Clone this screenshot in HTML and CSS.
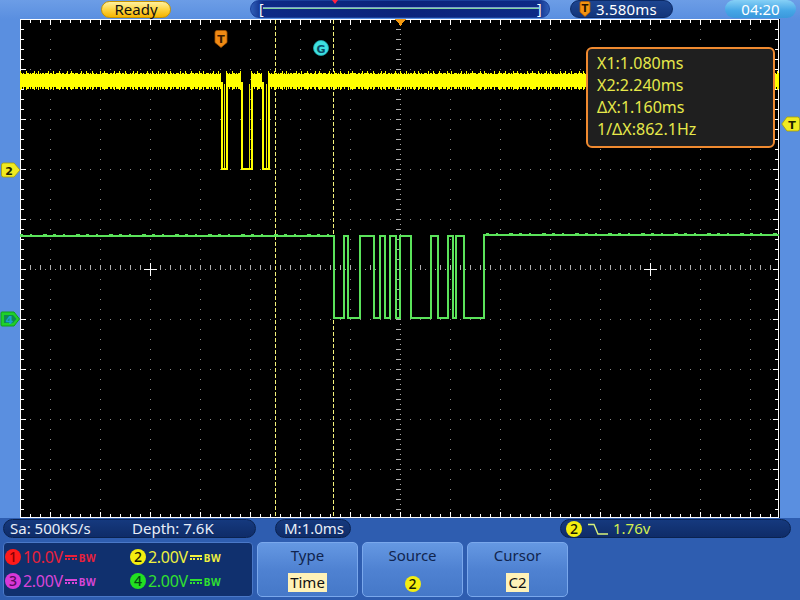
FILE: index.html
```html
<!DOCTYPE html>
<html>
<head>
<meta charset="utf-8">
<link rel="stylesheet" href="styles.css">
</head>
<body>
<div class="scope">
  <header class="topbar">
    <div class="ready">Ready</div>
    <div class="timebar">
      <svg class="timebar-svg" width="300" height="18" viewBox="0 0 300 18">
        <path d="M13,8.5 H289" stroke="#7fd6a0" stroke-width="1"/>
        <path d="M13,7.5 H289" stroke="#c9e8ff" stroke-width="1" opacity="0.6"/>
        <polygon points="82,0 88,0 85,4" fill="#ff2040"/>
      </svg>
      <span class="br br-l">[</span><span class="br br-r">]</span>
    </div>
    <div class="tpill">
      <svg class="ticon" width="12" height="16" viewBox="0 0 12 16"><path d="M1,2 Q1,0.5 2.5,0.5 H9.5 Q11,0.5 11,2 V11 L6,15.5 L1,11 Z" fill="#f39412" stroke="#b35a00" stroke-width="0.8"/><text x="6" y="10.5" text-anchor="middle" class="ticon-t">T</text></svg>
      <span class="tpill-text">3.580ms</span>
    </div>
    <div class="clock">04:20</div>
  </header>

  <main class="mid">
    <div class="gutter gutter-l"></div>
    <div class="screen">
      <svg class="scr" width="760" height="499" viewBox="20 19 760 499" shape-rendering="crispEdges">
        <rect x="20" y="19" width="760" height="499" fill="#000"/>
        <!-- grid dots -->
        <path stroke="#8a8a8a" stroke-width="1" stroke-dasharray="1 9"
          d="M50.5,19V518 M100.5,19V518 M150.5,19V518 M200.5,19V518 M250.5,19V518 M300.5,19V518 M350.5,19V518 M450.5,19V518 M500.5,19V518 M550.5,19V518 M600.5,19V518 M650.5,19V518 M700.5,19V518 M750.5,19V518
             M20,69.5H779 M20,119.5H779 M20,169.5H779 M20,219.5H779 M20,319.5H779 M20,369.5H779 M20,419.5H779 M20,469.5H779"/>
        <!-- center axes -->
        <path stroke="#a0a0a0" stroke-width="1" stroke-dasharray="1 4" d="M20,269.5H779 M400.5,19V518"/>
        <path stroke="#b0b0b0" stroke-width="5" stroke-dasharray="1 9" d="M398,19V518"/>
        <path stroke="#b0b0b0" stroke-width="5" stroke-dasharray="1 9" d="M20,267.5H779"/>
        <!-- crosshairs -->
        <path stroke="#ffffff" stroke-width="1" d="M144,269.5H157 M150.5,263V276 M644,269.5H657 M650.5,263V276"/>
        <!-- edge ticks -->
        <g stroke="#ffffff">
          <path stroke-width="4" stroke-dasharray="1 9" d="M20,21H780 M20,516H780"/>
          <path stroke-width="6" stroke-dasharray="1 49" d="M50,22H780 M50,515H780"/>
          <path stroke-width="4" stroke-dasharray="1 9" d="M22,19V518 M777,19V518"/>
          <path stroke-width="6" stroke-dasharray="1 49" d="M23,69V518 M776,69V518"/>
          <rect x="20.5" y="19.5" width="758" height="498" fill="none" stroke-width="1"/>
        </g>
        <!-- cursor lines -->
        <path stroke="#f4f27a" stroke-width="1" stroke-dasharray="4 2" d="M275.5,20V517 M333.5,20V517"/>
        <!-- CH2 yellow trace -->
        <g stroke="#ffff00" fill="none">
          <path stroke-width="13" d="M20,80.5H221 M226,80.5H241 M251,80.5H262 M268,80.5H779"/>
          <path stroke-width="16" stroke-dasharray="2 1 1 2 3 1 1 1 2 2 1 3 1 1 2 1 3 2" d="M20,80.5H221 M226,80.5H241 M251,80.5H262 M268,80.5H779"/>
          <path stroke-width="19" stroke-dasharray="1 5 1 7 1 3 1 9 1 4" d="M20,80.5H221 M226,80.5H241 M251,80.5H262 M268,80.5H779"/>
          <path stroke-width="2" d="M222,82V169H227V82 M242,82V169H252V82 M263,82V169H269V82"/>
          <path stroke-width="1" d="M224.5,84V167.5 M249.5,84V167.5 M266.5,84V167.5" stroke="#e8e800"/>
        </g>
        <!-- CH4 green trace -->
        <path fill="none" stroke="#5be35b" stroke-width="2"
          d="M20,236 H334 V318 H344 V236 H348 V318 H360 V236 H374 V318 H380 V236 H385 V318 H390 V236 H396 V318 H400 V236 H411 V318 H431 V236 H438 V318 H448 V236 H453 V318 H456 V236 H464 V318 H484 V235 H779"/>
        <path fill="none" stroke="#5be35b" stroke-width="1" stroke-dasharray="3 7 2 11 4 6" d="M20,234.5H330 M486,233.5H779"/>
        <!-- trigger position marker top -->
        <polygon points="395,19 406,19 400.5,26" fill="#f59a10"/>
        <!-- T marker -->
        <g transform="translate(214,30)" shape-rendering="geometricPrecision">
          <path d="M1,2.5 Q1,0.5 3,0.5 H11 Q13,0.5 13,2.5 V12.5 L7,17.5 L1,12.5 Z" fill="#f08a14" stroke="#a85600" stroke-width="0.8"/>
          <text x="7" y="12.5" text-anchor="middle" class="mk">T</text>
        </g>
        <!-- G marker -->
        <g shape-rendering="geometricPrecision">
          <circle cx="321" cy="48" r="7.5" fill="#3ee0e0" stroke="#20a8b0" stroke-width="0.8"/>
          <text x="321" y="52.5" text-anchor="middle" class="mk mk-g">G</text>
        </g>
      </svg>
      <div class="cursorbox">
        <div>X1:1.080ms</div>
        <div>X2:2.240ms</div>
        <div>ΔX:1.160ms</div>
        <div>1/ΔX:862.1Hz</div>
      </div>
    </div>
    <div class="gutter gutter-r"></div>

    <svg class="tag tag-2" width="21" height="16" viewBox="0 0 21 16"><path d="M1.5,3 Q1.5,1 3.5,1 H14 L20,8 L14,15 H3.5 Q1.5,15 1.5,13 Z" fill="#f0ea20" stroke="#a8a000" stroke-width="0.8"/><text x="9" y="12.5" text-anchor="middle" class="tagt">2</text></svg>
    <svg class="tag tag-4" width="21" height="16" viewBox="0 0 21 16"><path d="M1,2 Q1,1 2,1 H14 L19.5,8 L14,15 H2 Q1,15 1,14 Z" fill="#1fd02a" stroke="#10a018" stroke-width="1"/><path d="M4,4 H13 L16.5,8 L13,12 H4 Z" fill="#0f8a50"/><text x="9.5" y="12.5" text-anchor="middle" class="tagt tagt-4">4</text></svg>
    <svg class="tag tag-t" width="19" height="16" viewBox="0 0 19 16"><path d="M0.8,8 L6,1 H16.5 Q18.5,1 18.5,3 V13 Q18.5,15 16.5,15 H6 Z" fill="#f0ea20" stroke="#a8a000" stroke-width="0.8"/><text x="11" y="12.5" text-anchor="middle" class="tagt">T</text></svg>
  </main>

  <footer class="bottom">
    <div class="inforow">
      <div class="pill pill-sa"><span class="sa">Sa: 500KS/s</span><span>Depth: 7.6K</span></div>
      <div class="pill pill-m">M:1.0ms</div>
      <div class="pill pill-trig">
        <span class="num num-2">2</span>
        <svg class="edge" width="22" height="14" viewBox="0 0 22 14"><path d="M1,2.5 H7 L11,12 H21" fill="none" stroke="#d8f27a" stroke-width="1.4"/></svg>
        <span class="trig-v">1.76v</span>
      </div>
    </div>
    <div class="btnrow">
      <div class="chbox">
        <div class="ch ch1"><span class="num num-1">1</span><span class="v">10.0V</span><span class="bw"><i></i>BW</span></div>
        <div class="ch ch2"><span class="num num-2">2</span><span class="v">2.00V</span><span class="bw"><i></i>BW</span></div>
        <div class="ch ch3"><span class="num num-3">3</span><span class="v">2.00V</span><span class="bw"><i></i>BW</span></div>
        <div class="ch ch4"><span class="num num-4">4</span><span class="v">2.00V</span><span class="bw"><i></i>BW</span></div>
      </div>
      <div class="btn"><div class="btn-l">Type</div><div class="btn-v">Time</div></div>
      <div class="btn"><div class="btn-l">Source</div><div class="btn-v btn-v-num"><span class="num num-2">2</span></div></div>
      <div class="btn"><div class="btn-l">Cursor</div><div class="btn-v">C2</div></div>
    </div>
  </footer>
</div>
</body>
</html>
```

FILE: styles.css
```css
* { box-sizing: border-box; }
html, body { margin: 0; padding: 0; }
body {
  width: 800px;
  height: 600px;
  overflow: hidden;
  font-family: "Noto Sans", "Open Sans", "DejaVu Sans", sans-serif;
  background: #5089da;
}
.scope { width: 800px; height: 600px; display: flex; flex-direction: column; }

/* top bar */
.topbar {
  height: 19px;
  display: flex;
  align-items: flex-start;
  background: linear-gradient(#6c9de6, #5a8fe0);
}
.ready {
  margin-left: 101px;
  margin-top: 1px;
  width: 70px;
  height: 17px;
  border-radius: 9px;
  background: linear-gradient(#fff0a0 0%, #ffd84a 45%, #f5b400 100%);
  border: 1px solid #c89400;
  color: #111;
  font-size: 15px;
  line-height: 15px;
  text-align: center;
}
.timebar {
  position: relative;
  margin-left: 79px;
  width: 300px;
  height: 18px;
  border-radius: 9px;
  background: linear-gradient(90deg, #2f5fb8 0, #0d2a86 4%, #0b237a 50%, #0d2a86 96%, #2f5fb8 100%);
  border: 1px solid #1a3f9a;
}
.timebar-svg { position: absolute; left: -1px; top: -1px; }
.br { position: absolute; top: -1px; color: #ffffff; font-size: 14px; line-height: 18px; }
.br-l { left: 8px; }
.br-r { left: 286px; }
.tpill {
  margin-left: 20px;
  width: 103px;
  height: 18px;
  border-radius: 9px;
  background: linear-gradient(#1d4590, #12357a);
  border: 1px solid #0c2a66;
  display: flex;
  align-items: center;
}
.ticon { margin-left: 8px; }
.ticon-t { font-size: 10px; font-weight: bold; fill: #2a1400; font-family: "DejaVu Sans", sans-serif; }
.tpill-text { margin-left: 5px; color: #ffffff; font-size: 15px; line-height: 16px; letter-spacing: 0.2px; }
.clock {
  margin-left: 52px;
  width: 71px;
  height: 18px;
  border-radius: 9px;
  background: linear-gradient(#86d0f6, #45a6e6 60%, #3a98dc);
  color: #ffffff;
  font-size: 15px;
  line-height: 16px;
  padding-top: 1px;
  text-align: center;
}

/* middle */
.mid { position: relative; height: 499px; display: flex; }
.gutter { width: 20px; background: #5a8fe0; }
.gutter-r { width: 20px; }
.screen { position: relative; width: 760px; height: 499px; }
.scr { display: block; }
.mk { font-family: "DejaVu Sans", sans-serif; font-weight: bold; font-size: 11px; fill: #3a1a00; }
.mk-g { fill: #0a4a66; font-size: 11px; }
.cursorbox {
  position: absolute;
  left: 566px;
  top: 28px;
  width: 189px;
  height: 101px;
  border: 2px solid #f08a30;
  border-radius: 6px;
  background: #1f1f1f;
  padding: 3px 0 0 9px;
  color: #e6e84a;
  font-size: 16px;
  line-height: 22px;
}
.tag { position: absolute; }
.tag-2 { left: 0; top: 143px; }
.tag-4 { left: 0; top: 292px; }
.tag-t { left: 781px; top: 97px; }
.tagt { font-family: "DejaVu Sans", sans-serif; font-weight: bold; font-size: 11px; fill: #202000; }
.tagt-4 { fill: #1aa0d0; }

/* bottom */
.bottom {
  height: 82px;
  background: #2e5db0;
  display: flex;
  flex-direction: column;
}
.inforow { height: 24px; display: flex; align-items: flex-start; padding-top: 1px; }
.pill {
  height: 19px;
  border-radius: 10px;
  background: linear-gradient(#15397e, #0f2c68);
  border: 1px solid #0a2250;
  color: #e8eef8;
  font-size: 15px;
  line-height: 17px;
  display: flex;
  align-items: center;
}
.pill-sa { margin-left: 3px; width: 253px; padding-left: 6px; }
.sa { width: 122px; }
.pill-m { margin-left: 19px; width: 76px; padding-left: 8px; }
.pill-trig { margin-left: 209px; width: 231px; padding-left: 5px; }
.edge { margin-left: 5px; }
.trig-v { margin-left: 4px; color: #d4f050; }

.num {
  display: inline-flex;
  align-items: center;
  justify-content: center;
  width: 16px;
  height: 16px;
  border-radius: 50%;
  font-size: 14px;
  line-height: 16px;
  font-weight: 500;
}
.num-1 { background: #ff1a1a; color: #8a0000; }
.num-2 { background: #f4ee10; color: #1a1a00; }
.num-3 { background: #d838d8; color: #5a0860; }
.num-4 { background: #22e022; color: #044a10; }

.btnrow { height: 55px; display: flex; }
.chbox {
  margin-left: 3px;
  width: 250px;
  height: 55px;
  border-radius: 4px;
  background: #10306e;
  border: 1px solid #4a78c8;
  display: grid;
  grid-template-columns: 125px 120px;
  grid-template-rows: 24px 24px;
  padding: 2px 0 0 1px;
}
.ch { display: flex; align-items: center; font-size: 16px; }
.ch .v { margin-left: 2px; letter-spacing: -0.3px; }
.ch1 .v { color: #e8203a; }
.ch2 .v { color: #eef040; }
.ch3 .v { color: #d845d8; }
.ch4 .v { color: #30e030; }
.bw {
  display: inline-flex;
  align-items: center;
  margin-left: 2px;
  font-size: 10px;
  font-weight: bold;
  letter-spacing: 0.6px;
  padding-top: 2px;
}
.bw i {
  display: inline-block;
  width: 12px;
  height: 5px;
  border-top: 2px solid currentColor;
  border-bottom: 2px dotted currentColor;
  margin-right: 2px;
  margin-top: -2px;
}
.ch1 .bw { color: #e8203a; }
.ch2 .bw { color: #eef040; }
.ch3 .bw { color: #d845d8; }
.ch4 .bw { color: #30e030; }

.btn {
  margin-left: 4px;
  width: 101px;
  height: 55px;
  border-radius: 5px;
  border: 1px solid #7aa8ec;
  background: linear-gradient(#6598e2 0%, #4f82d2 50%, #4578c8 100%);
  display: flex;
  flex-direction: column;
  align-items: center;
}
.btn:first-of-type { margin-left: 5px; }
.btn-l { margin-top: 2px; color: #10244e; font-size: 15px; line-height: 20px; }
.btn-v {
  margin-top: 8px;
  background: #fff2b8;
  color: #111;
  font-size: 15px;
  line-height: 19px;
  padding: 0 2px;
  height: 19px;
}
.btn-v-num { background: transparent; padding: 1px 0 0; }
```
